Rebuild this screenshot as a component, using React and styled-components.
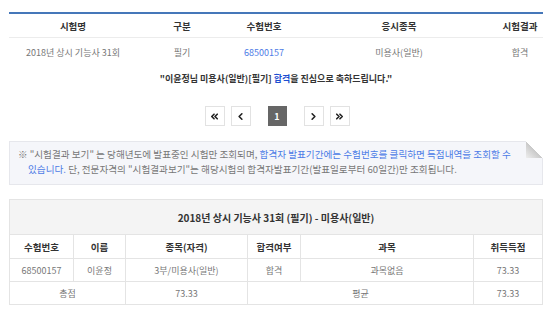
import styled, { createGlobalStyle } from "styled-components"
import { ChevronsLeft, ChevronLeft, ChevronRight, ChevronsRight } from "lucide-react"

const Global = createGlobalStyle`
    body {
        margin: 0;
        background: #fff;
        font-family: "Noto Sans CJK KR", "Noto Sans", sans-serif;
        color: #333;
    }
`

const Page = styled.div`
    width: 534px;
    padding: 12px 13px 0 9px;
`

const ResultTable = styled.table`
    width: 100%;
    border-collapse: collapse;
    table-layout: fixed;
    border-top: 2px solid #4577b9;
`

const Th = styled.th`
    height: 23px;
    padding: 0;
    font-size: 9.5px;
    font-weight: bold;
    color: #333;
    border-bottom: 1px solid #ececec;
`

const Td = styled.td`
    height: 29px;
    padding: 0;
    font-size: 9px;
    color: #777;
    text-align: center;
`

const Link = styled.span`
    color: ${p => p.$dark ? "#1d4fd1" : "#4c7be6"};
`

const Message = styled.p`
    margin: 5px 0 0;
    text-align: center;
    font-size: 9px;
    font-weight: bold;
    color: #333;
`

const Pager = styled.div`
    display: flex;
    justify-content: center;
    align-items: center;
    margin: 21px 0 0;
    padding-left: 2px;
`

const PageBtn = styled.div`
    width: 18px;
    height: 18px;
    display: flex;
    align-items: center;
    justify-content: center;
    border: 1px solid #e2e2e2;
    background: #fff;
    color: #222;
    margin-left: ${p => p.$gap || 0}px;
`

const Current = styled.div`
    width: 19px;
    height: 20px;
    display: flex;
    align-items: center;
    justify-content: center;
    background: #666;
    color: #fff;
    font-size: 9px;
    font-weight: bold;
    margin-left: 17px;
`

const Notice = styled.div`
    position: relative;
    margin-top: 15px;
    background: #f5f6fa;
    border: 1px solid #e6e7ec;
    padding: 5px 20px 7px 18px;
    font-size: 9.6px;
    line-height: 15px;
    color: #777;
    text-indent: -10px;
    word-break: keep-all;

    &::after {
        content: "";
        position: absolute;
        top: -1px;
        right: -1px;
        width: 17px;
        height: 17px;
        background: linear-gradient(225deg, #fff 50%, #c9c9c9 52%, #eeeeee 100%);
    }
`

const ScoreTable = styled.table`
    width: 100%;
    margin-top: 14px;
    border-collapse: collapse;
    table-layout: fixed;
    border: 1px solid #e4e4e4;
`

const Caption = styled.th`
    height: 34px;
    padding: 0;
    background: #f4f4f4;
    font-size: 10px;
    font-weight: bold;
    color: #333;
    border-bottom: 1px solid #e4e4e4;
`

const Head = styled.th`
    height: 23px;
    padding: 0;
    font-size: 9.5px;
    font-weight: bold;
    color: #333;
    border: 1px solid #e4e4e4;
`

const Cell = styled.td`
    height: 22px;
    padding: 0;
    font-size: 9px;
    color: #777;
    text-align: center;
    border: 1px solid #e4e4e4;
`

const icon = { size: 11, strokeWidth: 3.5 }

const App = () => {
    return (
        <Page>
            <Global />
            <ResultTable>
                <colgroup>
                    <col style={{ width: 128 }} />
                    <col style={{ width: 90 }} />
                    <col style={{ width: 74 }} />
                    <col style={{ width: 196 }} />
                    <col />
                </colgroup>
                <thead>
                    <tr>
                        <Th>시험명</Th>
                        <Th>구분</Th>
                        <Th>수험번호</Th>
                        <Th>응시종목</Th>
                        <Th>시험결과</Th>
                    </tr>
                </thead>
                <tbody>
                    <tr>
                        <Td>2018년 상시 기능사 31회</Td>
                        <Td>필기</Td>
                        <Td><Link>68500157</Link></Td>
                        <Td>미용사(일반)</Td>
                        <Td>합격</Td>
                    </tr>
                </tbody>
            </ResultTable>

            <Message>"이윤정님 미용사(일반)[필기] <Link $dark>합격</Link>을 진심으로 축하드립니다."</Message>

            <Pager>
                <PageBtn><ChevronsLeft {...icon} /></PageBtn>
                <PageBtn $gap={6}><ChevronLeft {...icon} /></PageBtn>
                <Current>1</Current>
                <PageBtn $gap={17}><ChevronRight {...icon} /></PageBtn>
                <PageBtn $gap={6}><ChevronsRight {...icon} /></PageBtn>
            </Pager>

            <Notice>
                ※ "시험결과 보기" 는 당해년도에 발표중인 시험만 조회되며, <Link>합격자 발표기간에는 수험번호를 클릭하면 득점내역을 조회할 수 있습니다.</Link> 단, 전문자격의 "시험결과보기"는 해당시험의 합격자발표기간(발표일로부터 60일간)만 조회됩니다.
            </Notice>

            <ScoreTable>
                <colgroup>
                    <col style={{ width: 64 }} />
                    <col style={{ width: 52 }} />
                    <col style={{ width: 122 }} />
                    <col style={{ width: 53 }} />
                    <col style={{ width: 173 }} />
                    <col />
                </colgroup>
                <thead>
                    <tr>
                        <Caption colSpan={6}>2018년 상시 기능사 31회 (필기) - 미용사(일반)</Caption>
                    </tr>
                    <tr>
                        <Head>수험번호</Head>
                        <Head>이름</Head>
                        <Head>종목(자격)</Head>
                        <Head>합격여부</Head>
                        <Head>과목</Head>
                        <Head>취득득점</Head>
                    </tr>
                </thead>
                <tbody>
                    <tr>
                        <Cell>68500157</Cell>
                        <Cell>이윤정</Cell>
                        <Cell>3부/미용사(일반)</Cell>
                        <Cell>합격</Cell>
                        <Cell>과목없음</Cell>
                        <Cell>73.33</Cell>
                    </tr>
                    <tr>
                        <Cell colSpan={2}>총점</Cell>
                        <Cell>73.33</Cell>
                        <Cell colSpan={2}>평균</Cell>
                        <Cell>73.33</Cell>
                    </tr>
                </tbody>
            </ScoreTable>
        </Page>
    )
}

export default App
